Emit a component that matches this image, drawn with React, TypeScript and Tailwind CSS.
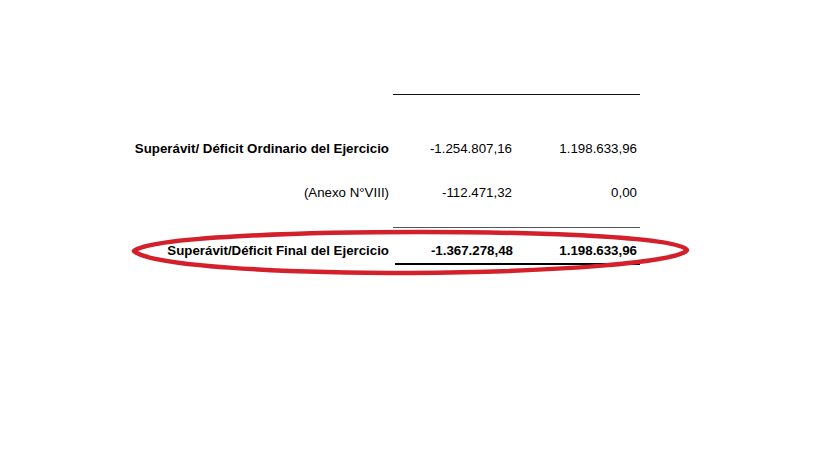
import React from 'react';

const rows = [
  { label: 'Superávit/ Déficit Ordinario del Ejercicio', a: '-1.254.807,16', b: '1.198.633,96', bold: true },
  { label: '(Anexo N°VIII)', a: '-112.471,32', b: '0,00', bold: false },
];

const App: React.FC = () => {
  return (
    <div className="relative w-[819px] h-[460px] bg-white overflow-hidden font-['Liberation_Sans',Arial,sans-serif] text-[13.3px] text-black">
      <div className="pt-[94px]">
        <div className="grid grid-cols-[393px_247px]">
          <div />
          <div className="border-t border-[#111]" />
        </div>

        <div className="mt-[46px] flex flex-col gap-[28px]">
          {rows.map((r) => (
            <div key={r.label} className="grid grid-cols-[389px_127px_124px] h-[16px] leading-[16px]">
              <div className={`text-right whitespace-nowrap ${r.bold ? 'font-bold' : ''}`}>{r.label}</div>
              <div className="text-right pr-[4px]">{r.a}</div>
              <div className="text-right pr-[3px]">{r.b}</div>
            </div>
          ))}
        </div>

        <div className="mt-[26px] grid grid-cols-[393px_247px]">
          <div />
          <div className="border-t border-[#555]" />
        </div>

        <div className="mt-[15px] grid grid-cols-[389px_127px_124px] leading-[16px] font-bold">
          <div className="text-right h-[16px] whitespace-nowrap">Superávit/Déficit Final del Ejercicio</div>
          <div className="ml-[6px] text-right pr-[3px] pb-[4px] border-b-2 border-black">-1.367.278,48</div>
          <div className="text-right pr-[3px] pb-[3px] border-b-2 border-black">1.198.633,96</div>
        </div>
      </div>

      <svg className="absolute left-0 top-0" width="819" height="460" viewBox="0 0 819 460" fill="none">
        <path
          d="M 134 251 C 150 237, 300 232, 420 232 C 560 232, 678 238, 687 250 C 680 262, 560 272, 410 273 C 280 273, 150 266, 134 251 Z"
          stroke="#d3202b"
          strokeWidth="4.5"
          strokeLinejoin="round"
        />
      </svg>
    </div>
  );
};

export default App;
